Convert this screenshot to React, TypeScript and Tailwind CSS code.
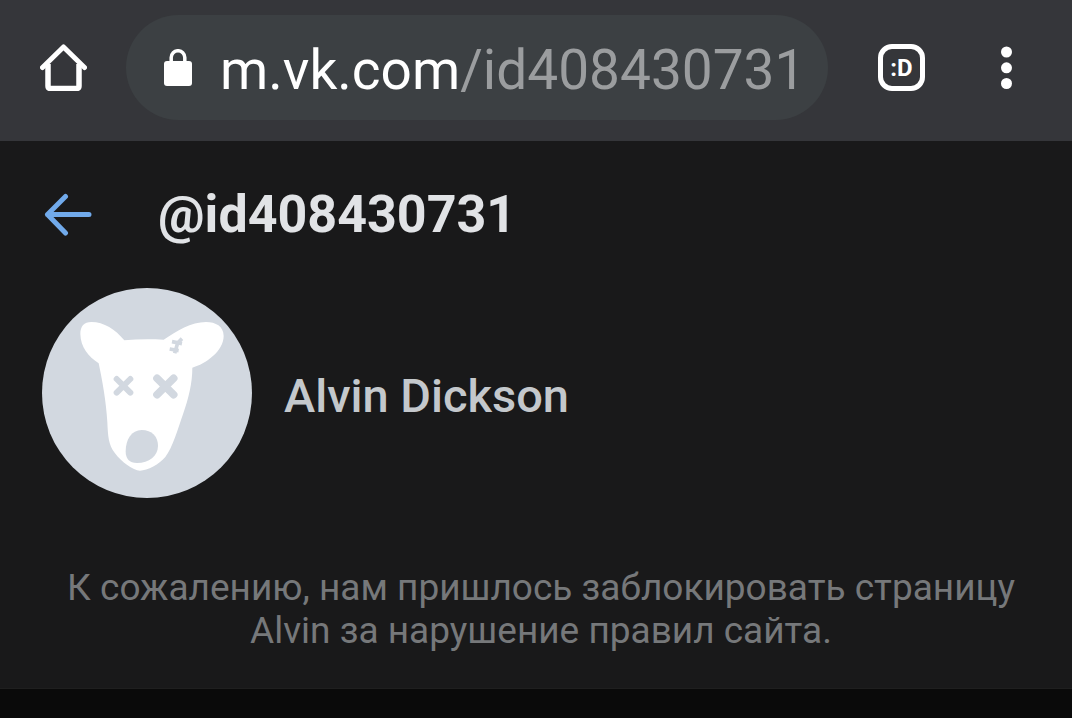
const profile = {
  host: "m.vk.com",
  path: "/id408430731",
  handle: "@id408430731",
  name: "Alvin Dickson",
};

function HomeIcon() {
  return (
    <svg viewBox="0 0 47 47" className="size-[47px]" fill="none" stroke="currentColor" aria-hidden="true">
      <path d="M8 20V42Q8 44.500 10.500 44.500H36.500Q39 44.500 39 42V20" strokeWidth="5.500" />
      <path d="M2.500 23.500 23.500 3 44.500 23.500" strokeWidth="5" strokeLinecap="round" strokeLinejoin="round" />
    </svg>
  );
}

function LockIcon() {
  return (
    <svg viewBox="0 0 28 37" className="h-[37px] w-[28px] shrink-0" aria-hidden="true">
      <rect y="12" width="28" height="25" rx="3" fill="currentColor" />
      <path d="M7.200 14V8.500a6.800 6.800 0 0 1 13.600 0V14" fill="none" stroke="currentColor" strokeWidth="3.500" />
    </svg>
  );
}

function DotsIcon() {
  return (
    <svg viewBox="0 0 12 44" className="h-[44px] w-[12px]" fill="currentColor" aria-hidden="true">
      <circle cx="6.500" cy="6" r="5.500" />
      <circle cx="6.500" cy="21.800" r="5.500" />
      <circle cx="6.500" cy="37.500" r="5.500" />
    </svg>
  );
}

function BackIcon() {
  return (
    <svg
      viewBox="0 0 48 44"
      className="h-[44px] w-[48px]"
      fill="none"
      stroke="currentColor"
      strokeWidth="5"
      strokeLinecap="round"
      strokeLinejoin="round"
      aria-hidden="true"
    >
      <path d="M45 21.500H3.500M21.500 3.500 3.500 21.500 21.500 40" />
    </svg>
  );
}

function DogAvatar() {
  return (
    <svg viewBox="36 24 630 630" className="size-[210px] shrink-0" role="img" aria-label={profile.name}>
      <circle cx="351" cy="339" r="315" fill="#d2d8e0" />
      <path
        d="M283 181C256 148 222 126 184 126C162 126 151 139 151 162C152 202 175 229 206 250C216 297 229 367 232 426C234 468 235 494 255 520C274 545 309 572 330 572C352 572 389 552 406 531C428 503 443 448 459 403C476 354 487 310 487 263C527 252 581 213 581 168C581 139 557 126 528 126C483 126 441 153 401 179C363 177 322 177 283 181Z"
        fill="#fff"
      />
      {/* Eyes */}
      <g stroke="#d2d8e0" strokeLinecap="round">
        <path d="M260 297 301 338M301 297 260 338" strokeWidth="18" />
        <path d="M381 295 431 344M431 295 381 344" strokeWidth="23" />
      </g>
      {/* Nose */}
      <path d="M335 450C366 450 384 470 384 497C384 528 357 549 321 549C298 549 287 537 287 514C287 478 305 450 335 450Z" fill="#d2d8e0" />
      {/* Stitches on the ear */}
      <g fill="none" stroke="#d2d8e0" strokeLinejoin="round">
        <path d="M456 176 443 189 434 220" strokeWidth="11" />
        <path d="M426 185 456 191M419 207 446 212" strokeWidth="11" />
      </g>
    </svg>
  );
}

export default function App() {
  return (
    <div className="flex min-h-screen flex-col bg-[#0a0a0a] font-['Roboto',sans-serif]">
      {/* Browser bar */}
      <header className="flex items-center bg-[#35363a] pt-[15px] pr-[60px] pb-[21px] pl-10 text-white">
        <button type="button" aria-label="Home">
          <HomeIcon />
        </button>
        <button
          type="button"
          aria-label="Address"
          className="ml-[39px] flex h-[105px] min-w-0 flex-1 items-center gap-7 rounded-full bg-[#3c4043] pl-[38px]"
        >
          <LockIcon />
          <span className="pt-1.5 text-[55px] leading-none whitespace-nowrap">
            {profile.host}
            <span className="text-[#9b9d9f]">{profile.path}</span>
          </span>
        </button>
        <button
          type="button"
          aria-label="Tabs"
          className="ml-[50px] flex size-[47px] items-center justify-center rounded-[14px] border-5 border-white text-2xl leading-none font-bold"
        >
          :D
        </button>
        <button type="button" aria-label="Menu" className="ml-[75px]">
          <DotsIcon />
        </button>
      </header>

      <main className="border-b border-[#1f1f1f] bg-[#19191a] pb-9">
        <div className="flex h-[147px] items-center gap-[66px] pl-11">
          <a href="#back" aria-label="Back" className="text-[#71aaeb]">
            <BackIcon />
          </a>
          <h1 className="text-[52px] leading-none font-bold text-[#e1e3e6]">{profile.handle}</h1>
        </div>

        <section className="flex items-center gap-8 pl-[42px]">
          <DogAvatar />
          <h2 className="pt-1 text-[47px] leading-none font-medium text-[#c4c8cc]">{profile.name}</h2>
        </section>

        <p className="mt-[68px] pr-8 pl-[42px] text-center text-[37px] leading-[43px] text-[#76787a]">
          К сожалению, нам пришлось заблокировать страницу Alvin за нарушение правил сайта.
        </p>
      </main>
    </div>
  );
}
